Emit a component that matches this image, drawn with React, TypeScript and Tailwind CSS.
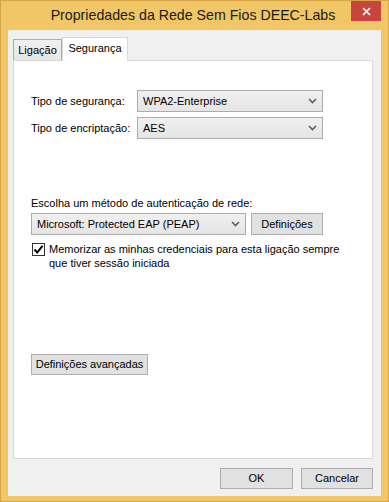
function Chevron() {
  return (
    <svg width="9" height="6" viewBox="0 0 9 6" className="shrink-0">
      <path d="M1 1 L4.5 4.5 L8 1" fill="none" stroke="#606060" strokeWidth="1.6" />
    </svg>
  );
}

function Combo({ value, className }: { value: string; className: string }) {
  return (
    <div
      className={`flex items-center justify-between h-[22px] pl-[5px] pr-[5px] border border-[#acacac] bg-gradient-to-b from-[#f0f0f0] to-[#e5e5e5] ${className}`}
    >
      <span>{value}</span>
      <Chevron />
    </div>
  );
}

function Button({ label, className }: { label: string; className: string }) {
  return (
    <div
      className={`flex items-center justify-center h-[21px] border border-[#adadad] bg-[#e1e1e1] ${className}`}
    >
      {label}
    </div>
  );
}

export default function App() {
  return (
    <div className="w-[389px] h-[502px] flex flex-col bg-[#f1c667] border border-[#d8a648] text-black text-[11px] font-['Liberation_Sans',Arial,sans-serif]">
      {/* Title bar */}
      <div className="relative h-[29px] shrink-0 flex items-center justify-center">
        <span className="text-[14.2px] text-[#1a1a1a] leading-none pb-[1px] pr-[3px]">
          Propriedades da Rede Sem Fios DEEC-Labs
        </span>
        <div className="absolute top-0 right-[7px] w-[30px] h-[20px] bg-[#c7453e] flex items-center justify-center">
          <svg width="9" height="9" viewBox="0 0 9 9">
            <path d="M1 1 L8 8 M8 1 L1 8" stroke="#ffffff" strokeWidth="1.7" />
          </svg>
        </div>
      </div>

      {/* Client area */}
      <div className="flex-1 mx-[7px] mb-[5px] bg-[#f0f0f0] flex flex-col pt-[7px] pl-[5px] pr-[8px] pb-[7px]">
        {/* Tabs */}
        <div className="flex items-end h-[23px] shrink-0">
          <div className="h-[21px] w-[49px] flex items-center justify-center border border-b-0 border-[#acacac] bg-gradient-to-b from-[#f0f0f0] to-[#e5e5e5]">
            Ligação
          </div>
          <div className="relative z-10 -mb-px h-[24px] w-[66px] flex items-center justify-center pb-[2px] border border-b-0 border-[#d9d9d9] bg-white">
            Segurança
          </div>
        </div>

        {/* Panel */}
        <div className="flex-1 bg-white border border-[#d9d9d9] flex flex-col pl-[17px] pt-[29px]">
          <div className="flex items-center">
            <span className="w-[106px]">Tipo de segurança:</span>
            <Combo value="WPA2-Enterprise" className="w-[186px]" />
          </div>
          <div className="flex items-center mt-[5px]">
            <span className="w-[106px]">Tipo de encriptação:</span>
            <Combo value="AES" className="w-[186px]" />
          </div>

          <div className="mt-[57px] leading-[15px]">Escolha um método de autenticação de rede:</div>
          <div className="flex items-center mt-[2px] gap-[5px]">
            <Combo value="Microsoft: Protected EAP (PEAP)" className="w-[215px]" />
            <Button label="Definições" className="w-[72px] h-[22px]" />
          </div>

          <div className="flex items-start mt-[7px] gap-[4px] leading-[14px]">
            <div className="mt-[1px] ml-[1px] w-[13px] h-[13px] shrink-0 border border-[#333333] bg-white flex items-center justify-center">
              <svg width="11" height="11" viewBox="0 0 11 11">
                <path d="M1.5 5.5 L4.2 8.5 L9.5 1.8" fill="none" stroke="#000000" strokeWidth="2" />
              </svg>
            </div>
            <div className="w-[295px]">
              Memorizar as minhas credenciais para esta ligação sempre que tiver sessão iniciada
            </div>
          </div>

          <Button label="Definições avançadas" className="mt-[84px] w-[117px] self-start" />
        </div>

        {/* Bottom buttons */}
        <div className="flex justify-end gap-[8px] mt-[9px] shrink-0">
          <Button label="OK" className="w-[73px] border-[#3c8fd9]" />
          <Button label="Cancelar" className="w-[72px]" />
        </div>
      </div>
    </div>
  );
}
